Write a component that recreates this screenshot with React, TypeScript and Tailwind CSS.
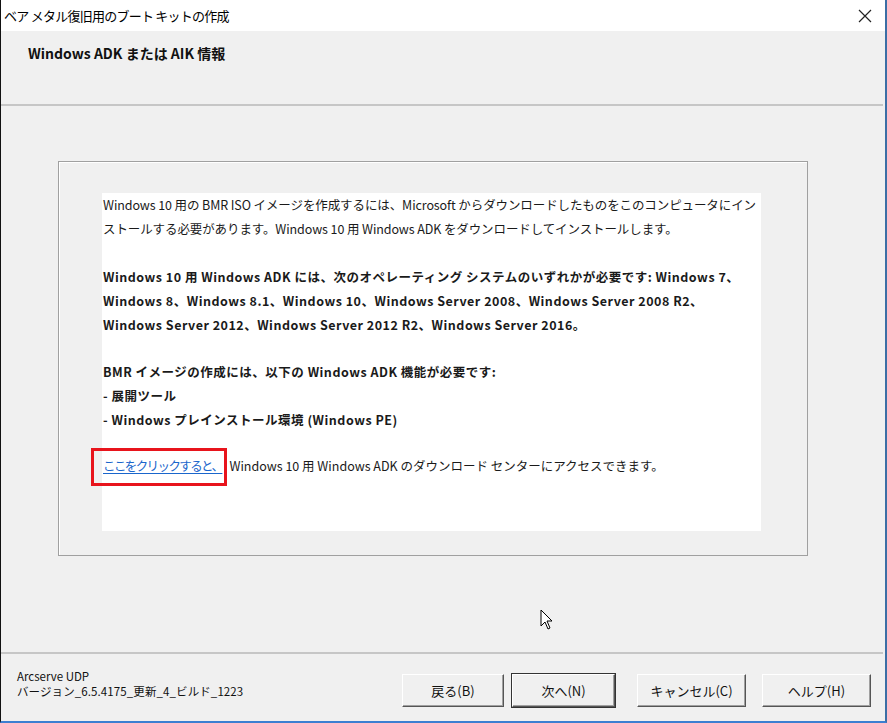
import React from "react";

const jp = "font-['Noto_Sans_CJK_JP','Noto_Sans',sans-serif]";

function WinButton({ label, isDefault = false, className = "" }: { label: string; isDefault?: boolean; className?: string }) {
  return (
    <button
      className={`h-[33px] bg-[#f0f0f0] text-[13px] text-[#111] leading-none border-t border-l border-t-white border-l-white border-r border-b border-r-[#555] border-b-[#555] shadow-[inset_-1px_-1px_0_#a0a0a0] ${
        isDefault ? "outline outline-1 outline-[#333]" : ""
      } ${className}`}
    >
      {label}
    </button>
  );
}

export default function App() {
  return (
    <div className={`relative w-[887px] h-[723px] flex flex-col bg-[#f0f0f0] border-l border-l-[#111] border-r-2 border-r-[#3b6ea5] border-b-2 border-b-[#3c7fd1] ${jp}`}>
      {/* title bar */}
      <div className="h-[31px] bg-white flex items-center justify-between pl-[3px] pr-[10px]">
        <span className="text-[13px] text-black tracking-[-0.75px]">ベア メタル復旧用のブート キットの作成</span>
        <svg width="14" height="14" viewBox="0 0 14 14" className="mr-[3px]">
          <path d="M1 1 L13 13 M13 1 L1 13" stroke="#222" strokeWidth="1.2" />
        </svg>
      </div>

      {/* header */}
      <div className="h-[73px] pl-[27px] pt-[9px]">
        <span className="text-[14px] font-bold text-[#111]">Windows ADK または AIK 情報</span>
      </div>
      <div className="h-[2px] bg-[#c6c6c6] mr-[2px]" />

      {/* body */}
      <div className="flex-1 pl-[57px] pt-[55px]">
        <div className="w-[750px] h-[395px] border border-[#a0a0a0] shadow-[inset_1px_1px_0_#fff] pl-[43px] pt-[31px]">
          <div className="relative w-[659px] h-[338px] bg-white pl-[1px] text-[12.5px] leading-[24px] text-[#1a1a1a] whitespace-nowrap">
            <p className="tracking-[-0.1px]">Windows 10 用の BMR ISO イメージを作成するには、Microsoft からダウンロードしたものをこのコンピュータにイン</p>
            <p className="tracking-[-0.1px]">ストールする必要があります。Windows 10 用 Windows ADK をダウンロードしてインストールします。</p>
            <p className="h-[24px]" />
            <div className="font-bold tracking-[0.5px]">
              <p>Windows 10 用 Windows ADK には、次のオペレーティング システムのいずれかが必要です: Windows 7、</p>
              <p>Windows 8、Windows 8.1、Windows 10、Windows Server 2008、Windows Server 2008 R2、</p>
              <p>Windows Server 2012、Windows Server 2012 R2、Windows Server 2016。</p>
              <p className="h-[23px]" />
              <p>BMR イメージの作成には、以下の Windows ADK 機能が必要です:</p>
              <p>- 展開ツール</p>
              <p>- Windows プレインストール環境 (Windows PE)</p>
            </div>
            <p className="h-[22px]" />
            <p>
              <a className="text-[#1a66cc] underline underline-offset-2 tracking-[-1.6px]">ここをクリックすると、</a>
              <span className="ml-[7px]">Windows 10 用 Windows ADK のダウンロード センターにアクセスできます。</span>
            </p>

            {/* annotation box */}
            <div className="absolute left-[-11px] top-[255px] w-[136px] h-[38px] border-[3px] border-[#e8141c]" />
          </div>
        </div>
      </div>

      {/* cursor */}
      <svg className="absolute left-[539px] top-[609px]" width="14" height="22" viewBox="0 0 14 22">
        <path d="M1 1 L1 17 L5 13 L8 20 L10 19 L7 12 L12 12 Z" fill="#fff" stroke="#000" strokeWidth="1" strokeLinejoin="round" />
      </svg>

      {/* footer */}
      <div className="h-[2px] bg-[#c6c6c6] mr-[2px]" />
      <div className="h-[67px] flex items-start pl-[16px] pt-[15px] pr-[14px]">
        <div className="flex-1 text-[11.5px] leading-[15px] text-[#111]">
          <div>Arcserve UDP</div>
          <div className="tracking-[0.1px]">バージョン_6.5.4175_更新_4_ビルド_1223</div>
        </div>
        <div className="flex items-center pt-[5px]">
          <WinButton label="戻る(B)" className="w-[102px]" />
          <WinButton label="次へ(N)" isDefault className="w-[103px] ml-[8px]" />
          <WinButton label="キャンセル(C)" className="w-[109px] ml-[22px]" />
          <WinButton label="ヘルプ(H)" className="w-[109px] ml-[16px]" />
        </div>
      </div>
    </div>
  );
}
